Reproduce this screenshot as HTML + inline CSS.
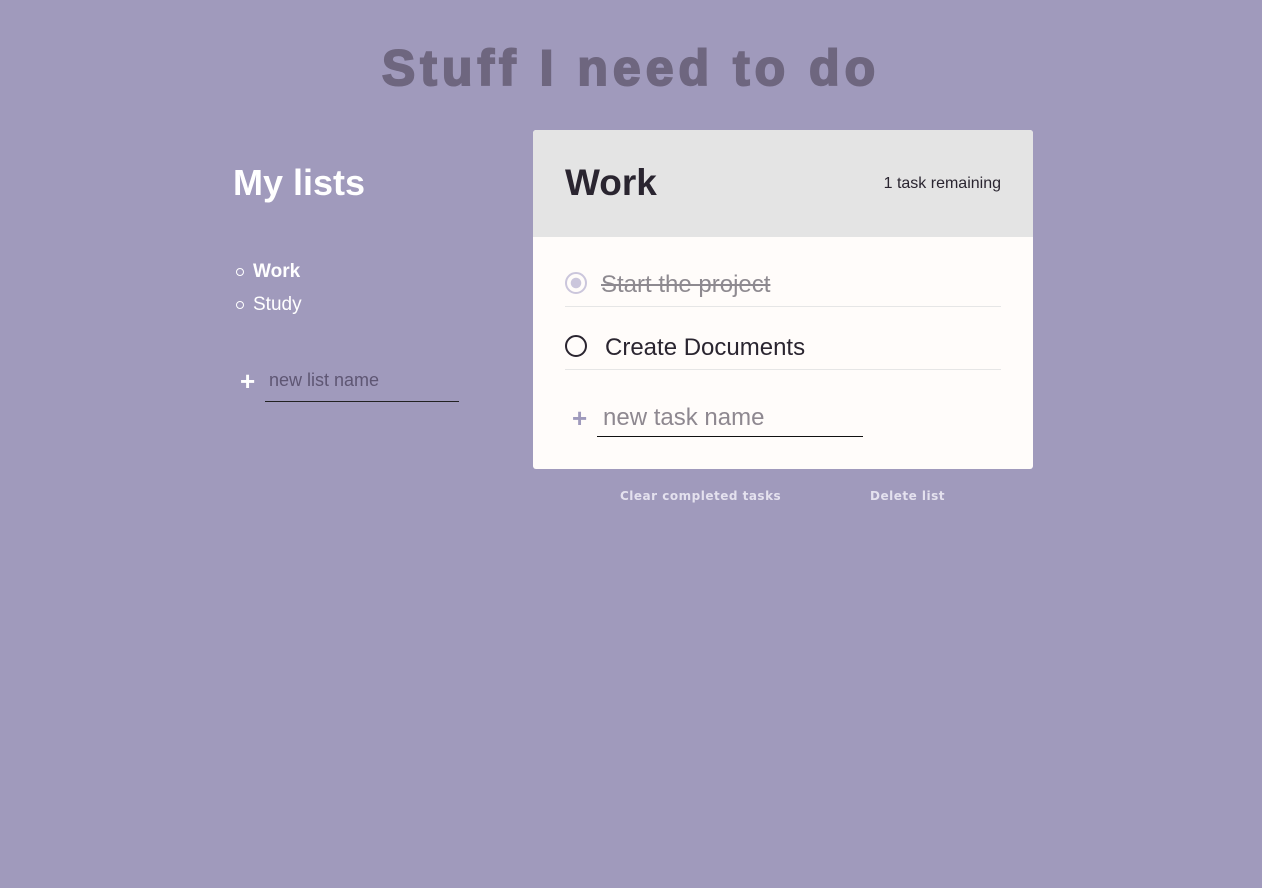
<!DOCTYPE html>
<html><head><style>
*{margin:0;padding:0;box-sizing:border-box}
body{width:1262px;height:888px;background:#a09abc;font-family:"Liberation Sans",Arial,sans-serif;position:relative;overflow:hidden}
h1{position:absolute;left:0;width:1262px;top:39px;text-align:center;font-size:50px;font-weight:900;color:#6e667f;letter-spacing:5px;-webkit-text-stroke:2px #6e667f}
.my{position:absolute;left:233px;top:162px;font-size:36px;font-weight:bold;color:#fff}
ul{position:absolute;left:236px;top:255px;list-style:none;color:#fff;font-size:19px}
ul li{height:33px;display:flex;align-items:center}
ul li span.b{width:8px;height:8px;border:1px solid #fff;border-radius:50%;margin-right:9px;display:inline-block}
.nl{position:absolute;left:240px;top:366px;color:#fff;font-size:26px;font-weight:bold}
.nlin{position:absolute;left:265px;top:370px;width:194px;height:32px;border-bottom:1px solid #222;color:#5e5673;font-size:18px;padding-left:4px}
.card{position:absolute;left:533px;top:130px;width:500px;height:339px;background:#fffcfa;border-radius:3px;overflow:hidden}
.hd{height:107px;background:#e4e4e4;position:relative}
.hd .t{position:absolute;left:32px;top:32px;font-size:37px;font-weight:bold;color:#2a2530}
.hd .r{position:absolute;right:32px;top:45px;font-size:16px;color:#2a2530}
.task{position:absolute;left:32px;width:436px;height:63px;border-bottom:1px solid #e6e6e6}
.c{position:absolute;left:0;width:22px;height:22px;border-radius:50%;border:2px solid #2a2530}
.tx{position:absolute;left:40px;font-size:24px}
.plus{position:absolute;left:572px;top:403px;color:#9f9abc;font-size:26px;font-weight:bold}
.tin{position:absolute;left:597px;top:400px;width:266px;height:37px;border-bottom:1px solid #111;color:#8e8890;font-size:24px;padding-left:6px;padding-top:4px}
.btn{position:absolute;top:489px;font-family:"DejaVu Sans",Verdana,sans-serif;font-weight:bold;font-size:12px;color:#e4e1ee;letter-spacing:.5px}
</style></head><body>
<h1>Stuff I need to do</h1>
<div class="my">My lists</div>
<ul><li><span class="b"></span><b>Work</b></li><li><span class="b"></span>Study</li></ul>
<div class="nl">+</div>
<div class="nlin">new list name</div>
<div class="card">
<div class="hd"><div class="t">Work</div><div class="r">1 task remaining</div></div>
<div class="task" style="top:114px;height:63px">
<div class="c" style="top:28px;border-color:#cbc6dc;background:radial-gradient(circle,#cbc6dc 0 5px,transparent 5.5px)"></div>
<div class="tx" style="top:27px;left:36px;color:#8e8a90;text-decoration:line-through">Start the project</div></div>
<div class="task" style="top:177px">
<div class="c" style="top:28px"></div>
<div class="tx" style="top:27px;color:#2a2530">Create Documents</div></div>
</div>
<div class="plus">+</div>
<div class="tin">new task name</div>
<div class="btn" style="left:620px">Clear completed tasks</div>
<div class="btn" style="left:870px">Delete list</div>
</body></html>
